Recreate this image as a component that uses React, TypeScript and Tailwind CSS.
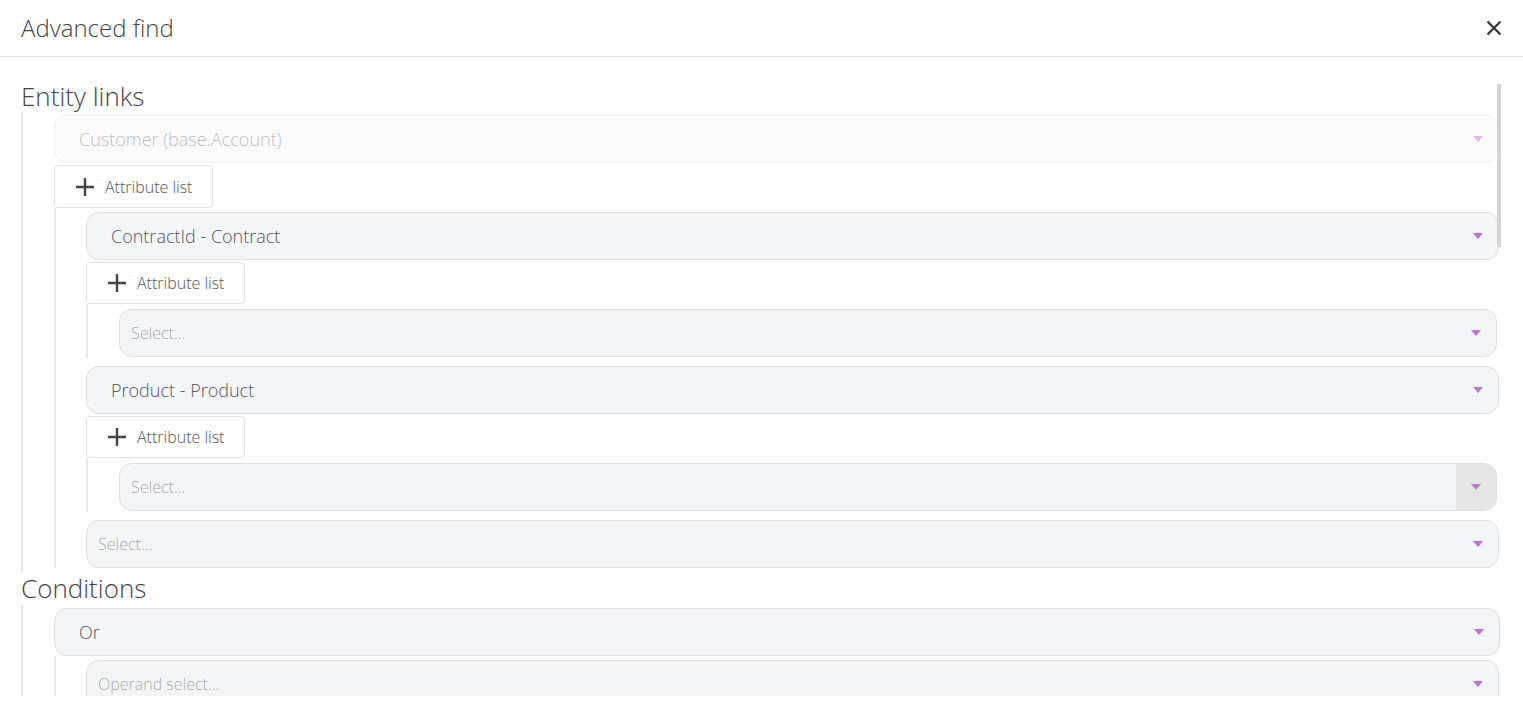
const font = { fontFamily: '"Open Sans", "Noto Sans", sans-serif' };

function Arrow({ light }: { light?: boolean }) {
  return (
    <svg width="10" height="6" viewBox="0 0 10 6" className="shrink-0">
      <path d="M0 0 L10 0 L5 6 Z" fill={light ? "#e4b6ea" : "#c46fd2"} />
    </svg>
  );
}

interface SelectProps {
  text: string;
  placeholder?: boolean;
  disabled?: boolean;
  hover?: boolean;
  className?: string;
}

function SelectBox({ text, placeholder, disabled, hover, className = "" }: SelectProps) {
  const bg = disabled ? "bg-[#fafbfd] border-[#eeeeee]" : "bg-[#f3f6f9] border-[#dedede]";
  const txt = placeholder
    ? "pl-[11px] text-[16px] text-[#a8a8a8]"
    : disabled
      ? "pl-[24px] text-[18px] text-[#bcbcbc]"
      : "pl-[24px] text-[18px] text-[#555555]";
  return (
    <div className={`flex h-[48px] items-center rounded-[13px] border ${bg} ${className}`}>
      <span className={`flex-1 truncate font-light ${txt}`}>{text}</span>
      {hover ? (
        <div className="flex h-full w-[40px] items-center justify-center rounded-r-[13px] bg-[#e5e5e5]">
          <Arrow />
        </div>
      ) : (
        <div className="flex w-[40px] items-center justify-center">
          <Arrow light={disabled} />
        </div>
      )}
    </div>
  );
}

function AttrButton({ tall }: { tall?: boolean }) {
  return (
    <button
      className={`mt-[2px] flex w-[159px] items-center gap-[10px] rounded-[4px] border border-[#e2e2e2] bg-white pl-[20px] ${tall ? "h-[43px]" : "h-[42px]"}`}
    >
      <svg width="20" height="20" viewBox="0 0 20 20">
        <path d="M10 1 V19 M1 10 H19" stroke="#444" strokeWidth="2.4" />
      </svg>
      <span className="text-[16px] font-light text-[#555]">Attribute list</span>
    </button>
  );
}

export default function App() {
  return (
    <div className="h-[716px] w-full overflow-hidden bg-white" style={font}>
      <div className="flex h-[57px] items-center justify-between border-b border-[#e3e3e3] pl-[21px] pr-[21px]">
        <h1 className="text-[24px] font-light text-[#444]">Advanced find</h1>
        <svg width="16" height="16" viewBox="0 0 16 16">
          <path d="M1.5 1.5 L14.5 14.5 M14.5 1.5 L1.5 14.5" stroke="#333" strokeWidth="2.2" />
        </svg>
      </div>
      <div className="relative h-[639px] overflow-hidden pl-[21px] pr-[23px] pt-[23px]">
        <div className="absolute right-[22px] top-[27px] h-[163px] w-[4px] bg-[#d4d4d4]" />
        <h2 className="h-[32px] text-[26px] font-light leading-[32px] text-[#444]">Entity links</h2>
        <div className="border-l-2 border-[#e8e8e8] pb-[4px] pl-[31px] pt-[3px]">
          <SelectBox text="Customer (base.Account)" disabled className="mr-[1px]" />
          <AttrButton tall />
          <div className="border-l-2 border-[#e8e8e8] pl-[30px] pt-[4px]">
            <SelectBox text="ContractId - Contract" className="mr-[1px]" />
            <AttrButton />
            <div className="border-l-2 border-[#e8e8e8] pb-[1px] pl-[31px] pt-[5px]">
              <SelectBox text="Select..." placeholder className="mr-[3px]" />
            </div>
            <SelectBox text="Product - Product" className="mr-[1px] mt-[8px]" />
            <AttrButton />
            <div className="border-l-2 border-[#e8e8e8] pb-[1px] pl-[31px] pt-[5px]">
              <SelectBox text="Select..." placeholder hover className="mr-[3px]" />
            </div>
            <SelectBox text="Select..." placeholder className="mr-[1px] mt-[8px]" />
          </div>
        </div>
        <h2 className="h-[33px] text-[26px] font-light leading-[33px] text-[#444]">Conditions</h2>
        <div className="border-l-2 border-[#e8e8e8] pl-[31px] pt-[3px]">
          <SelectBox text="Or" />
          <div className="border-l-2 border-[#e8e8e8] pl-[30px] pt-[4px]">
            <SelectBox text="Operand select..." placeholder className="mr-[1px]" />
          </div>
        </div>
      </div>
    </div>
  );
}
